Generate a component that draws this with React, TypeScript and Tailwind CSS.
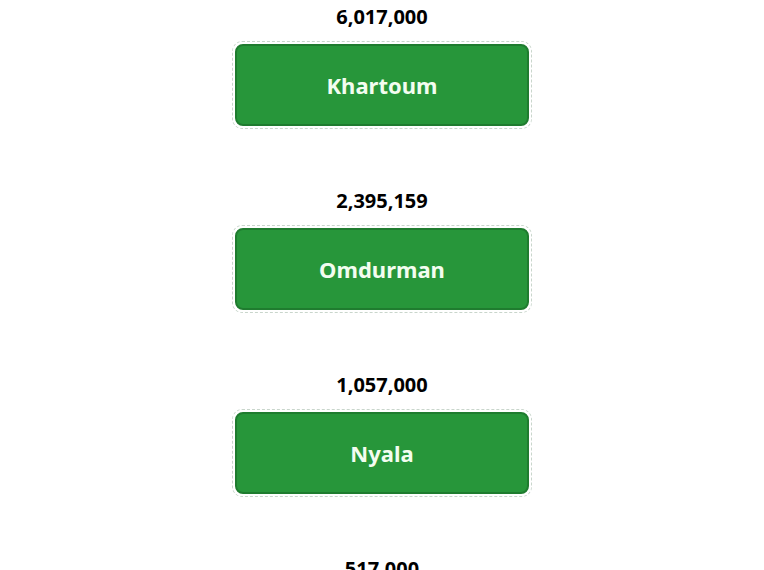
import React from 'react';

const cities = [
  { name: 'Khartoum', population: '6,017,000' },
  { name: 'Omdurman', population: '2,395,159' },
  { name: 'Nyala', population: '1,057,000' },
  { name: 'Port Sudan', population: '517,000' },
];

const CityCard: React.FC<{ name: string; population: string }> = ({ name, population }) => (
  <div className="flex flex-col items-center">
    <p className="text-[20px] leading-[28px] font-bold text-black">{population}</p>
    <div className="mt-[10px] w-[300px] h-[88px] p-[2px] rounded-[10px] border border-dashed border-[#c9d6cc]">
      <button className="w-full h-full flex items-center justify-center rounded-[8px] bg-[#27963a] border-2 border-[#1f7c2f] text-[#f3fdf0] text-[22px] font-bold">
        {name}
      </button>
    </div>
  </div>
);

export default function App() {
  return (
    <div
      className="min-h-screen bg-white flex flex-col items-center pt-[3px] gap-[58px]"
      style={{ fontFamily: '"Noto Sans", "Open Sans", sans-serif' }}
    >
      {cities.map((c) => (
        <CityCard key={c.name} name={c.name} population={c.population} />
      ))}
    </div>
  );
}
